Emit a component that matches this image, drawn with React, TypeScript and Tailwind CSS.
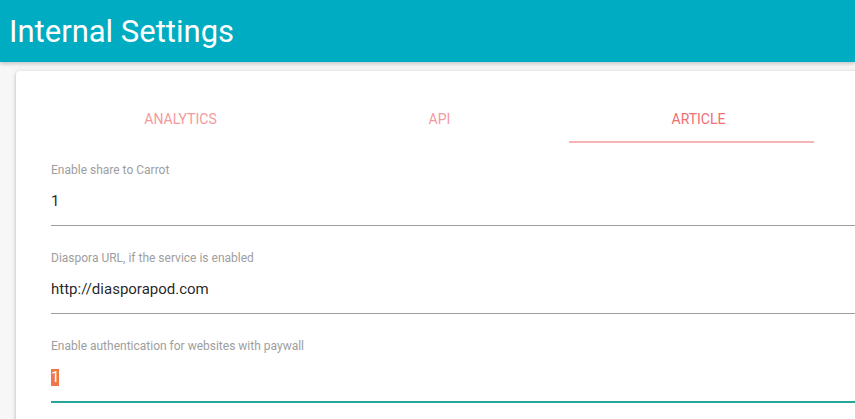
import React from 'react';

const tabs = [
  { id: 'analytics', label: 'ANALYTICS' },
  { id: 'api', label: 'API' },
  { id: 'article', label: 'ARTICLE' },
];

const fields = [
  { label: 'Enable share to Carrot', value: '1', focused: false },
  { label: 'Diaspora URL, if the service is enabled', value: 'http://diasporapod.com', focused: false },
  { label: 'Enable authentication for websites with paywall', value: '1', focused: true },
];

export default function App() {
  const active = 'article';

  return (
    <div className="w-[855px] h-[419px] overflow-hidden bg-[#f7f7f7] font-['Roboto',sans-serif]">
      <header className="relative z-10 h-[62px] bg-[#00acc1] flex items-center px-[9px] shadow-[0_2px_4px_0_rgba(0,0,0,0.2)]">
        <h1 className="text-[31px] leading-none text-white">Internal Settings</h1>
      </header>

      <div className="pl-4 pt-[9px]">
        <div className="w-[900px] h-[400px] bg-white rounded-sm pl-[35px] pt-6 shadow-[0_2px_2px_0_rgba(0,0,0,0.14),0_3px_1px_-2px_rgba(0,0,0,0.12),0_1px_5px_0_rgba(0,0,0,0.2)]">
          {/* Tabs */}
          <div className="flex w-[777px] h-12">
            {tabs.map(tab => (
              <div key={tab.id} className="relative flex-1 flex items-center justify-center">
                <span
                  className={
                    tab.id === active
                      ? 'text-[14px] text-[#ee6e73]'
                      : 'text-[14px] text-[#f39a9d]'
                  }
                >
                  {tab.label}
                </span>
                {tab.id === active && (
                  <div className="absolute left-0 bottom-0 w-[245px] h-[2px] bg-[#f6b2b5]" />
                )}
              </div>
            ))}
          </div>

          {/* Fields */}
          <div className="mt-[19px] flex flex-col gap-6">
            {fields.map(field => (
              <div key={field.label}>
                <div className="text-[12px] leading-4 text-[#9e9e9e]">{field.label}</div>
                <div
                  className={
                    field.focused
                      ? 'h-[48px] flex items-center border-b border-[#26a69a] shadow-[0_1px_0_0_#26a69a]'
                      : 'h-[48px] flex items-center border-b border-[#9e9e9e]'
                  }
                >
                  {field.focused ? (
                    <span className="text-[15px] leading-[17px] bg-[#f07746] text-white">{field.value}</span>
                  ) : (
                    <span className="text-[15px] text-[rgba(0,0,0,0.87)]">{field.value}</span>
                  )}
                </div>
              </div>
            ))}
          </div>
        </div>
      </div>
    </div>
  );
}
